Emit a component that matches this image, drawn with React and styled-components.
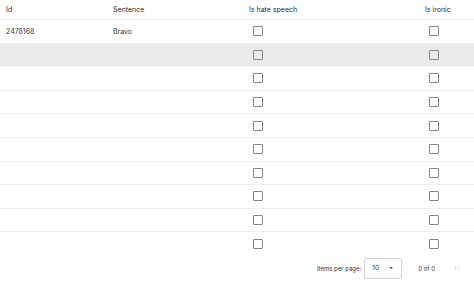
import React from "react";
import styled, { createGlobalStyle } from "styled-components";

const GlobalStyle = createGlobalStyle`
  body {
    margin: 0;
    background: #fff;
    font-family: Inter, "Noto Sans", sans-serif;
    color: #333;
  }
`;

const Table = styled.div`
  width: 474px;
  display: flex;
  flex-direction: column;
`;

const Row = styled.div`
  display: grid;
  grid-template-columns: 107px 136px 176px 1fr;
  align-items: center;
  height: ${(props) => (props.header ? "20px" : "23.6px")};
  box-sizing: border-box;
  border-bottom: ${(props) => (props.last ? "none" : "1px solid #efefef")};
  background: ${(props) => (props.hover ? "#ebebeb" : "#fff")};
`;

const Cell = styled.div`
  padding-left: 6px;
  font-size: 7px;
  font-weight: 400;
  color: ${(props) => (props.header ? "#2b2b2b" : "#333")};
  white-space: nowrap;
`;

const BoxCell = styled.div`
  padding-left: 10px;
  display: flex;
  align-items: center;
`;

const Box = styled.span`
  width: 8px;
  height: 8px;
  border: 1px solid #858585;
  border-radius: 1px;
  display: block;
`;

const Footer = styled.div`
  display: flex;
  align-items: center;
  justify-content: flex-end;
  height: 25px;
  padding-right: 12px;
  font-size: 6px;
  color: #333;
`;

const Label = styled.span`
  margin-right: 3px;
`;

const Select = styled.div`
  width: 38px;
  height: 21px;
  box-sizing: border-box;
  border: 1px solid #d4d4d4;
  border-radius: 2px;
  display: flex;
  align-items: center;
  justify-content: space-between;
  padding: 0 8px 0 7px;
  margin-right: 16px;
  font-size: 6.5px;
`;

const Arrow = styled.span`
  width: 0;
  height: 0;
  border-left: 2px solid transparent;
  border-right: 2px solid transparent;
  border-top: 2.5px solid #555;
`;

const Count = styled.span`
  margin-right: 18px;
`;

const FirstPage = styled.svg`
  width: 9px;
  height: 9px;
`;

const rows = [
  { id: "2478168", sentence: "Bravo" },
  ...Array.from({ length: 9 }, () => ({ id: "", sentence: "" })),
];

function App() {
  return (
    <>
      <GlobalStyle />
      <Table>
        <Row header>
          <Cell header>Id</Cell>
          <Cell header>Sentence</Cell>
          <Cell header>Is hate speech</Cell>
          <Cell header>Is ironic</Cell>
        </Row>
        {rows.map((r, i) => (
          <Row key={i} hover={i === 1} last={i === rows.length - 1}>
            <Cell>{r.id}</Cell>
            <Cell>{r.sentence}</Cell>
            <BoxCell>
              <Box />
            </BoxCell>
            <BoxCell>
              <Box />
            </BoxCell>
          </Row>
        ))}
        <Footer>
          <Label>Items per page:</Label>
          <Select>
            <span>10</span>
            <Arrow />
          </Select>
          <Count>0 of 0</Count>
          <FirstPage viewBox="0 0 24 24">
            <path
              d="M18.41 16.59 13.82 12l4.59-4.59L17 6l-6 6 6 6zM6 6h2v12H6z"
              fill="#d8d8d8"
            />
          </FirstPage>
        </Footer>
      </Table>
    </>
  );
}

export default App;
